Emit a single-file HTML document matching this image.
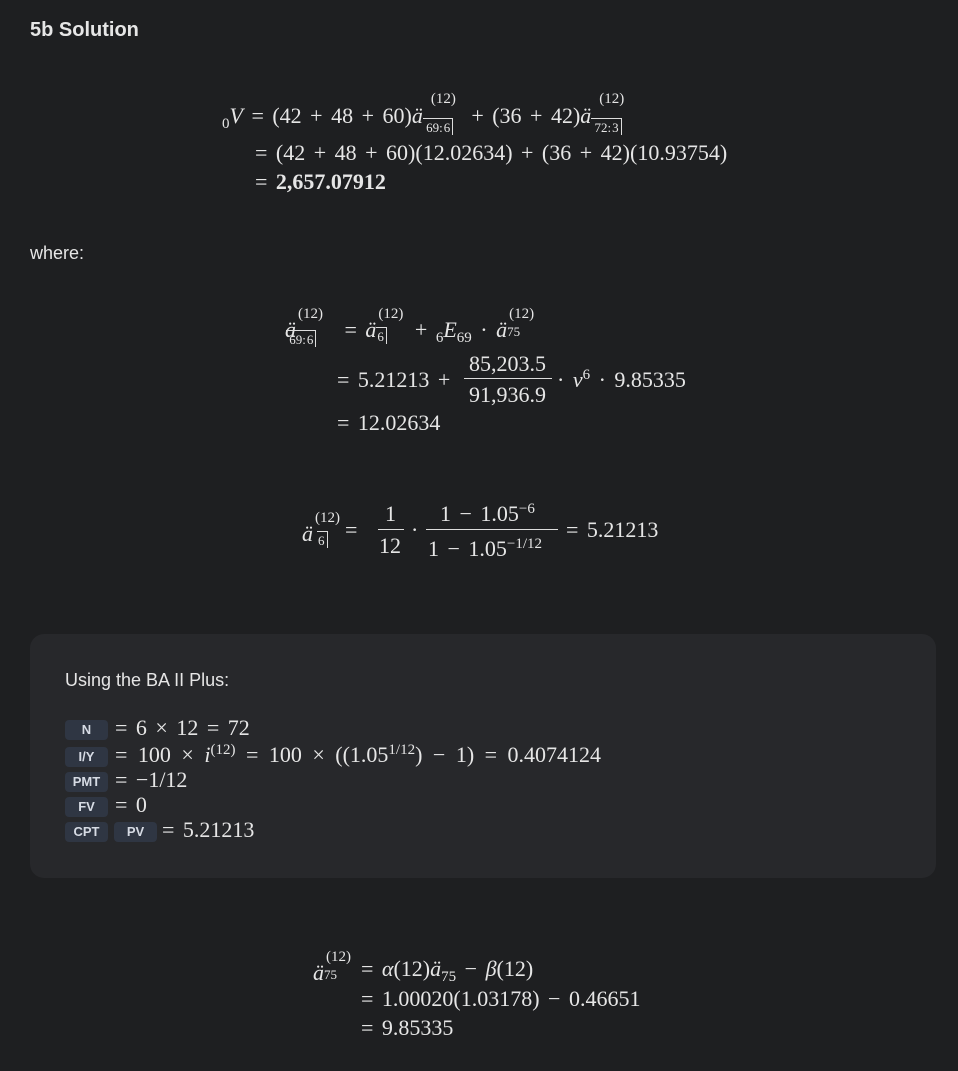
<!DOCTYPE html>
<html><head><meta charset="utf-8"><style>
body{margin:0;background:#1e1f21;width:958px;height:1071px;position:relative;overflow:hidden;color:#e6e6e6;font-family:"Liberation Serif",serif;}
.a{position:absolute;white-space:nowrap;font-size:22px;line-height:1;word-spacing:3px}
.s{font-family:"Liberation Sans",sans-serif;word-spacing:0}
.st{display:inline-block;position:relative;height:1em;vertical-align:baseline}
.st .u{position:absolute;left:0;top:-9px;font-size:15px;word-spacing:0}
.st .d{position:absolute;left:0;top:18px;font-size:13px;word-spacing:0}
.ov{border-top:1px solid #ddd;padding-top:2px}
.an{border-top:1px solid #ddd;border-right:1px solid #ddd;padding:1px 2px 0 1px}
sup{font-size:15px;vertical-align:8px;line-height:0}
.sb{font-size:15px;vertical-align:-5px}
.card{position:absolute;left:30px;top:634px;width:906px;height:244px;background:#27282b;border-radius:14px}
.k{position:absolute;font-family:"Liberation Sans",sans-serif;font-size:13px;font-weight:bold;color:#d6dbe4;background:#2f3643;border-radius:4px;height:20px;line-height:20px;text-align:center}
.bar{position:absolute;border-top:1px solid #ddd}
</style></head><body>
<div class="a s" style="left:30px;top:20px;font-size:20px;font-weight:bold">5b Solution</div>

<div class="a" style="left:222px;top:101px"><span class="sb">0</span><i>V</i> = (42 + 48 + 60)<i>ä</i><span class="st" style="width:40px"><span class="u" style="left:8px">(12)</span><span class="d ov" style="top:17px">&nbsp;69:<span class="an">6</span></span></span> + (36 + 42)<i>ä</i><span class="st" style="width:40px"><span class="u" style="left:8px">(12)</span><span class="d ov" style="top:17px">&nbsp;72:<span class="an">3</span></span></span></div>
<div class="a" style="left:255px;top:142px">= (42 + 48 + 60)(12.02634) + (36 + 42)(10.93754)</div>
<div class="a" style="left:255px;top:171px">= <b>2,657.07912</b></div>

<div class="a s" style="left:30px;top:244px;font-size:18px">where:</div>

<div class="a" style="left:285px;top:315px"><i>ä</i><span class="st" style="width:40px"><span class="u" style="left:2px;top:-8px">(12)</span><span class="d ov" style="left:-10px;top:15px">&nbsp;69:<span class="an">6</span></span></span> = <i>ä</i><span class="st" style="width:30px"><span class="u" style="left:2px;top:-8px">(12)</span><span class="d" style="top:15px"><span class="an">6</span></span></span> + <span class="sb">6</span><i>E</i><span class="sb">69</span> · <i>ä</i><span class="st" style="width:30px"><span class="u" style="left:2px;top:-8px">(12)</span><span class="d" style="top:10px">75</span></span></div>

<div class="a" style="left:337px;top:369px">= 5.21213 +</div>
<div class="a" style="left:469px;top:353px">85,203.5</div>
<div class="bar" style="left:464px;top:378px;width:88px"></div>
<div class="a" style="left:469px;top:384px">91,936.9</div>
<div class="a" style="left:557px;top:369px">· <i>v</i><sup>6</sup> · 9.85335</div>
<div class="a" style="left:337px;top:412px">= 12.02634</div>

<div class="a" style="left:302px;top:519px"><i>ä</i><span class="st" style="width:30px"><span class="u" style="left:2px;top:-8px">(12)</span><span class="d" style="top:15px;left:4px"><span class="an">6</span></span></span></div>
<div class="a" style="left:345px;top:519px">=</div>
<div class="a" style="left:385px;top:503px">1</div>
<div class="bar" style="left:378px;top:529px;width:26px"></div>
<div class="a" style="left:379px;top:535px">12</div>
<div class="a" style="left:411px;top:519px">·</div>
<div class="a" style="left:440px;top:503px">1 − 1.05<sup>−6</sup></div>
<div class="bar" style="left:426px;top:529px;width:132px"></div>
<div class="a" style="left:428px;top:538px">1 − 1.05<sup>−1/12</sup></div>
<div class="a" style="left:566px;top:519px">= 5.21213</div>

<div class="card"></div>
<div class="a s" style="left:65px;top:671px;font-size:18px">Using the BA II Plus:</div>
<div class="k" style="left:65px;top:720px;width:43px">N</div>
<div class="a" style="left:115px;top:717px">= 6 × 12 = 72</div>
<div class="k" style="left:65px;top:747px;width:43px">I/Y</div>
<div class="a" style="left:115px;top:744px;word-spacing:5px">= 100 × <i>i</i><sup>(12)</sup> = 100 × ((1.05<sup>1/12</sup>) − 1) = 0.4074124</div>
<div class="k" style="left:65px;top:772px;width:43px">PMT</div>
<div class="a" style="left:115px;top:769px">= −1/12</div>
<div class="k" style="left:65px;top:797px;width:43px">FV</div>
<div class="a" style="left:115px;top:794px">= 0</div>
<div class="k" style="left:65px;top:822px;width:43px">CPT</div>
<div class="k" style="left:114px;top:822px;width:43px">PV</div>
<div class="a" style="left:162px;top:819px">= 5.21213</div>

<div class="a" style="left:313px;top:958px"><i>ä</i><span class="st" style="width:34px"><span class="u" style="left:2px;top:-8px">(12)</span><span class="d" style="top:10px">75</span></span></div>
<div class="a" style="left:361px;top:958px">= <i>α</i>(12)<i>ä</i><span class="sb">75</span> − <i>β</i>(12)</div>
<div class="a" style="left:361px;top:988px">= 1.00020(1.03178) − 0.46651</div>
<div class="a" style="left:361px;top:1017px">= 9.85335</div>
</body></html>
